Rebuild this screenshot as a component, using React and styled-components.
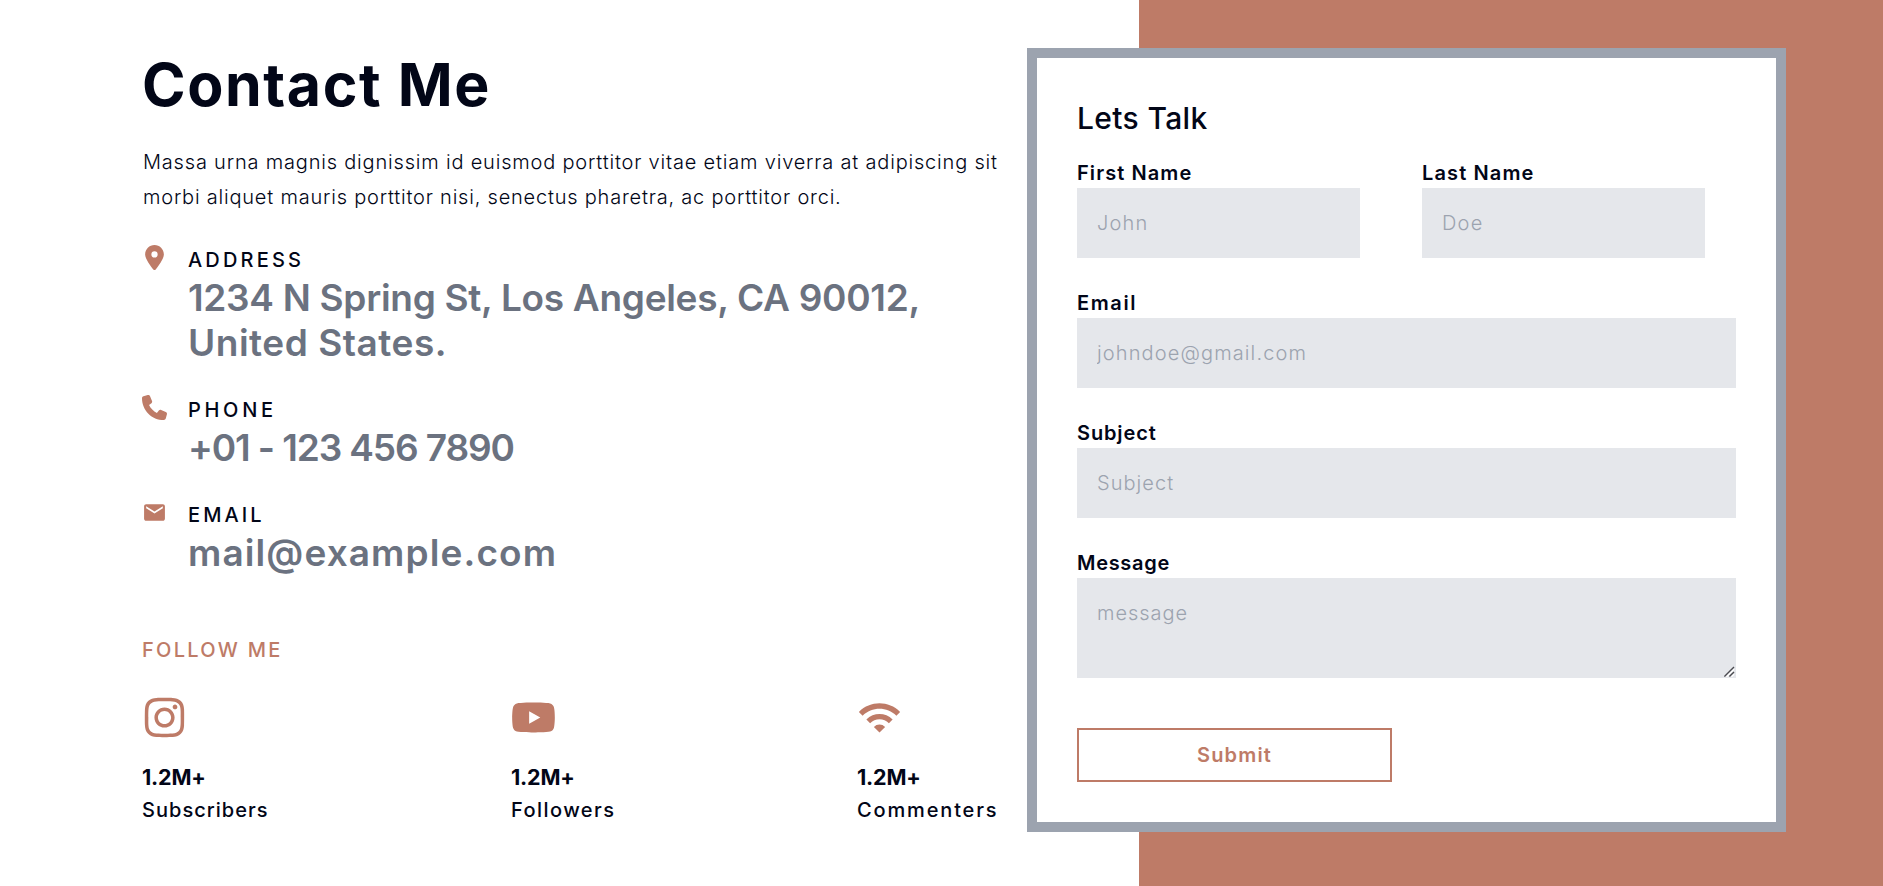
import React from "react";
import styled, { createGlobalStyle } from "styled-components";
import { FaLocationDot, FaPhone } from "react-icons/fa6";
import { FaInstagram, FaYoutube } from "react-icons/fa";
import { MdEmail, MdWifi } from "react-icons/md";

const accent = "#be7b67";
const ink = "#020617";

const GlobalStyle = createGlobalStyle`
  *, *::before, *::after { box-sizing: border-box; }
  body {
    margin: 0;
    background: #fff;
    color: ${ink};
    font-family: Inter, "Open Sans", sans-serif;
    font-size: 20px;
  }
  h1, h2, p { margin: 0; }
`;

const tracking = ({ $track = 0 }) => `letter-spacing: ${$track}px;`;

const Page = styled.main`
  display: flex;
  align-items: flex-start;
  gap: 30px;
  min-height: 886px;
  padding: 48px 97px 54px 142px;
  background: linear-gradient(to right, #fff 1139px, ${accent} 1139px);
`;

const Info = styled.section`
  width: 855px;
`;

const Heading = styled.h1`
  font-size: 59px;
  font-weight: 700;
  line-height: 74px;
  letter-spacing: 1.6px;
`;

const Intro = styled.p`
  margin-top: 23px;
  padding-left: 1px;
  font-weight: 300;
  line-height: 35px;
  white-space: nowrap;
`;

const IntroLine = styled.span`
  display: block;
  ${tracking}
`;

const ContactList = styled.div`
  display: flex;
  flex-direction: column;
  gap: 30px;
  margin-top: 30px;
`;

const ContactRow = styled.div`
  display: flex;
  align-items: flex-start;
  gap: 21px;
  svg { flex: none; color: ${accent}; }
`;

const ContactLabel = styled.div`
  font-weight: 500;
  line-height: 30px;
  ${tracking}
`;

const ContactValue = styled.div`
  color: #6b7280;
  font-size: 37px;
  font-weight: 600;
  line-height: 45px;
  white-space: nowrap;
  ${tracking}
`;

const FollowTitle = styled.h2`
  margin-top: 60px;
  color: ${accent};
  font-size: 20px;
  font-weight: 500;
  line-height: 30px;
  letter-spacing: 2.28px;
`;

const SocialRow = styled.div`
  display: grid;
  grid-template-columns: 369px 346px 1fr;
  margin-top: 30px;
`;

const Social = styled.div`
  display: flex;
  flex-direction: column;
  align-items: flex-start;
  svg { color: ${accent}; }
`;

const Count = styled.div`
  margin-top: 21px;
  font-size: 21.5px;
  font-weight: 700;
  line-height: 33px;
  letter-spacing: -0.2px;
`;

const SocialLabel = styled.div`
  margin-top: 1px;
  font-weight: 500;
  line-height: 30px;
  ${tracking}
`;

const Card = styled.form`
  display: flex;
  flex-direction: column;
  width: 759px;
  height: 784px;
  padding: 40px;
  border: 10px solid #9ca3af;
  background: #fff;
`;

const CardTitle = styled.h2`
  font-size: 30px;
  font-weight: 500;
  line-height: 40px;
  letter-spacing: 0.35px;
`;

const Fields = styled.div`
  display: flex;
  flex-direction: column;
  gap: 30px;
  margin-top: 20px;
`;

const NameRow = styled.div`
  display: flex;
  gap: 62px;
`;

const Field = styled.label`
  display: flex;
  flex-direction: column;
  width: ${({ $width }) => $width || "100%"};
`;

const FieldLabel = styled.span`
  font-weight: 600;
  line-height: 30px;
  ${tracking}
`;

const controlStyle = ({ $track = 1.2 }) => `
  display: block;
  width: 100%;
  margin: 0;
  padding: 20px;
  border: 0;
  border-radius: 0;
  outline: 0;
  background: #e5e7eb;
  color: ${ink};
  font: 300 20px/30px Inter, "Open Sans", sans-serif;
  letter-spacing: ${$track}px;
  &::placeholder { color: #9ca3af; opacity: 1; }
`;

const Input = styled.input`
  ${controlStyle}
  height: 70px;
`;

const TextAreaWrap = styled.div`
  position: relative;
`;

const TextArea = styled.textarea`
  ${controlStyle}
  height: 100px;
  resize: none;
`;

const ResizeGrip = styled.svg`
  position: absolute;
  right: 0;
  bottom: 0;
`;

const SubmitButton = styled.button`
  width: 315px;
  height: 54px;
  margin-top: 50px;
  padding: 0;
  border: 2px solid ${accent};
  background: #fff;
  color: ${accent};
  font: 600 20px/30px Inter, "Open Sans", sans-serif;
  letter-spacing: 1.16px;
`;

const contacts = [
  {
    icon: FaLocationDot,
    label: "ADDRESS",
    labelTrack: 3.18,
    lines: [
      { text: "1234 N Spring St, Los Angeles, CA 90012,", track: -0.29 },
      { text: "United States.", track: 0.52 },
    ],
  },
  { icon: FaPhone, label: "PHONE", labelTrack: 3.7, lines: [{ text: "+01 - 123 456 7890", track: -1.11 }] },
  { icon: MdEmail, label: "EMAIL", labelTrack: 3.08, lines: [{ text: "mail@example.com", track: 1.11 }] },
];

const socials = [
  { icon: FaInstagram, count: "1.2M+", label: "Subscribers", track: 1.03 },
  { icon: FaYoutube, count: "1.2M+", label: "Followers", track: 1.44 },
  { icon: MdWifi, count: "1.2M+", label: "Commenters", track: 1.85 },
];

export default function App() {
  return (
    <>
      <GlobalStyle />
      <Page>
        <Info>
          <Heading>Contact Me</Heading>
          <Intro>
            <IntroLine $track={0.81}>
              Massa urna magnis dignissim id euismod porttitor vitae etiam viverra at adipiscing sit
            </IntroLine>
            <IntroLine $track={0.79}>
              morbi aliquet mauris porttitor nisi, senectus pharetra, ac porttitor orci.
            </IntroLine>
          </Intro>
          <ContactList>
            {contacts.map(({ icon: Icon, label, labelTrack, lines }) => (
              <ContactRow key={label}>
                <Icon size={25} />
                <div>
                  <ContactLabel $track={labelTrack}>{label}</ContactLabel>
                  {lines.map(({ text, track }) => (
                    <ContactValue key={text} $track={track}>{text}</ContactValue>
                  ))}
                </div>
              </ContactRow>
            ))}
          </ContactList>
          <FollowTitle>FOLLOW ME</FollowTitle>
          <SocialRow>
            {socials.map(({ icon: Icon, count, label, track }) => (
              <Social key={label}>
                <Icon size={45} />
                <Count>{count}</Count>
                <SocialLabel $track={track}>{label}</SocialLabel>
              </Social>
            ))}
          </SocialRow>
        </Info>
        <Card onSubmit={(e) => e.preventDefault()}>
          <CardTitle>Lets Talk</CardTitle>
          <Fields>
            <NameRow>
              <Field $width="283px">
                <FieldLabel $track={1.08}>First Name</FieldLabel>
                <Input placeholder="John" $track={1.2} />
              </Field>
              <Field $width="283px">
                <FieldLabel $track={1.12}>Last Name</FieldLabel>
                <Input placeholder="Doe" $track={1.2} />
              </Field>
            </NameRow>
            <Field>
              <FieldLabel $track={1.6}>Email</FieldLabel>
              <Input placeholder="johndoe@gmail.com" $track={1.12} />
            </Field>
            <Field>
              <FieldLabel $track={0.88}>Subject</FieldLabel>
              <Input placeholder="Subject" $track={1.05} />
            </Field>
            <Field>
              <FieldLabel $track={0.7}>Message</FieldLabel>
              <TextAreaWrap>
                <TextArea placeholder="message" $track={0.95} />
                <ResizeGrip width="12" height="12" viewBox="0 0 12 12" fill="none" strokeWidth="1.4">
                  <path d="M2.5 10.8L10 3.3M7.5 10.8L10 8.3" stroke="#fff" />
                  <path d="M0.4 10.6L10 1M5.4 10.6L10 6" stroke="#4b4b50" />
                </ResizeGrip>
              </TextAreaWrap>
            </Field>
          </Fields>
          <SubmitButton type="submit">Submit</SubmitButton>
        </Card>
      </Page>
    </>
  );
}
